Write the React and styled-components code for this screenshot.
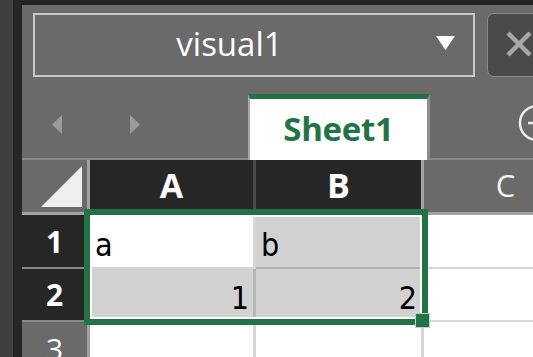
import React from 'react'
import styled, {createGlobalStyle} from 'styled-components'

const GlobalStyle = createGlobalStyle`
  html, body {
    margin: 0;
    padding: 0;
    background: #262626;
  }
  body {
    font-family: "Open Sans", "Noto Sans", sans-serif;
  }
`

const green = '#217346'

export default function App() {
  return (
    <>
      <GlobalStyle />
      <Page>
        <LeftStrip />
        <Gutter />
        <Main>
          <Toolbar>
            <Dropdown>
              <DropLabel>visual1</DropLabel>
              <DropArrow>
                <svg width="19" height="14" viewBox="0 0 19 14">
                  <polygon points="0,0 19,0 9.5,14" fill="#fff" />
                </svg>
              </DropArrow>
            </Dropdown>
            <CloseButton>
              <svg width="26" height="26" viewBox="0 0 26 26">
                <path d="M2 2 L24 24 M24 2 L2 24" stroke="#a8a8a8" strokeWidth="4.5" />
              </svg>
            </CloseButton>
          </Toolbar>

          <TabBar>
            <Nav>
              <svg width="10" height="19" viewBox="0 0 10 19">
                <polygon points="10,0 10,19 0,9.5" fill="#9c9c9c" />
              </svg>
              <svg width="10" height="19" viewBox="0 0 10 19">
                <polygon points="0,0 0,19 10,9.5" fill="#9c9c9c" />
              </svg>
            </Nav>
            <Tab>Sheet1</Tab>
            <AddSheet>
              <svg width="38" height="38" viewBox="0 0 38 38">
                <circle cx="19" cy="19" r="17" fill="none" stroke="#ececec" strokeWidth="2.5" />
                <path d="M10 19 H28 M19 10 V28" stroke="#ececec" strokeWidth="2.5" />
              </svg>
            </AddSheet>
          </TabBar>

          <Grid>
            <Corner>
              <svg width="41" height="41" viewBox="0 0 41 41">
                <polygon points="41,0 41,41 0,41" fill="#efefef" />
              </svg>
            </Corner>
            <ColHead active>A</ColHead>
            <ColHead active last>B</ColHead>
            <ColHead>C</ColHead>

            <RowHead active>1</RowHead>
            <Cell>a</Cell>
            <Cell sel>b</Cell>
            <Cell />

            <RowHead active>2</RowHead>
            <Cell sel num>1</Cell>
            <Cell sel num>2</Cell>
            <Cell />

            <RowHead>3</RowHead>
            <Cell />
            <Cell />
            <Cell />

            <Selection />
            <Handle />
          </Grid>
        </Main>
      </Page>
    </>
  )
}

const Page = styled.div`
  display: flex;
  width: 533px;
  height: 357px;
  overflow: hidden;
`

const LeftStrip = styled.div`
  width: 13px;
  flex: none;
  background: #3f3f3f;
`

const Gutter = styled.div`
  width: 9px;
  flex: none;
  background: #262626;
`

const Main = styled.div`
  flex: 1;
  min-width: 0;
  display: flex;
  flex-direction: column;
  background: #6a6a6a;
  border-top: 5px solid #232323;
  overflow: hidden;
`

const Toolbar = styled.div`
  display: flex;
  gap: 12px;
  padding: 8px 0 0 11px;
  height: 64px;
  flex: none;
`

const Dropdown = styled.div`
  width: 442px;
  flex: none;
  box-sizing: border-box;
  border: 2px solid #c8c8c8;
  display: flex;
  align-items: center;
`

const DropLabel = styled.div`
  flex: 1;
  text-align: center;
  color: #fff;
  font-size: 33px;
  line-height: 1;
  padding: 0 0 4px 6px;
`

const DropArrow = styled.div`
  width: 55px;
  display: flex;
  justify-content: center;
  padding-bottom: 4px;
`

const CloseButton = styled.div`
  width: 64px;
  height: 64px;
  flex: none;
  box-sizing: border-box;
  background: #4a4a4a;
  border: 1px solid #8a8a8a;
  border-radius: 7px;
  display: flex;
  align-items: center;
  justify-content: center;
  padding-bottom: 2px;
`

const TabBar = styled.div`
  height: 83px;
  flex: none;
  display: flex;
  align-items: flex-end;
  box-shadow: inset 0 -2px 0 #8a8a8a;
`

const Nav = styled.div`
  width: 226px;
  height: 66px;
  flex: none;
  box-sizing: border-box;
  display: flex;
  align-items: center;
  gap: 68px;
  padding: 0 0 5px 30px;
`

const Tab = styled.div`
  width: 182px;
  height: 66px;
  flex: none;
  box-sizing: border-box;
  background: #fff;
  border-top: 5px solid ${green};
  border-left: 2px solid #a8a8a8;
  border-right: 3px solid #8d8d8d;
  color: ${green};
  font-weight: 700;
  font-size: 33px;
  letter-spacing: -0.3px;
  display: flex;
  align-items: center;
  justify-content: center;
  padding-bottom: 2px;
`

const AddSheet = styled.div`
  align-self: center;
  margin: 8px 0 0 88px;
  display: flex;
`

const Grid = styled.div`
  position: relative;
  flex: none;
  display: grid;
  grid-template-columns: 68px 166px 168px 166px;
  grid-template-rows: 55px 54px 53px 54px;
`

const Corner = styled.div`
  box-sizing: border-box;
  background: #6a6a6a;
  border-right: 3px solid #a2a2a2;
  border-bottom: 3px solid #a2a2a2;
  display: flex;
  align-items: flex-end;
  justify-content: flex-end;
  padding: 0 5px 5px 0;
`

const ColHead = styled.div`
  box-sizing: border-box;
  background: ${p => (p.active ? '#262626' : '#6a6a6a')};
  border-right: 3px solid ${p => (p.active && !p.last ? '#4c4c4c' : '#a2a2a2')};
  border-bottom: 3px solid #a2a2a2;
  color: ${p => (p.active ? '#fff' : '#f2f2f2')};
  font-weight: ${p => (p.active ? 700 : 400)};
  font-size: ${p => (p.active ? '34px' : '31px')};
  display: flex;
  align-items: center;
  justify-content: center;
  padding-bottom: 2px;
`

const RowHead = styled.div`
  box-sizing: border-box;
  background: ${p => (p.active ? '#262626' : '#6a6a6a')};
  border-right: 3px solid #a2a2a2;
  border-bottom: 2px solid #8a8a8a;
  color: #fff;
  font-weight: ${p => (p.active ? 700 : 400)};
  font-size: 30px;
  display: flex;
  justify-content: center;
  align-items: center;
`

const Cell = styled.div`
  box-sizing: border-box;
  background: ${p => (p.sel ? '#d2d2d2' : '#fff')};
  border-right: 3px solid ${p => (p.sel ? '#b6b6b6' : '#d6d6d6')};
  border-bottom: 2px solid ${p => (p.sel ? '#b2b2b2' : '#d6d6d6')};
  color: #000;
  font-family: "DejaVu Sans Condensed", "DejaVu Sans", sans-serif;
  font-size: 32px;
  line-height: 1;
  display: flex;
  align-items: flex-end;
  justify-content: ${p => (p.num ? 'flex-end' : 'flex-start')};
  padding: 0 4px 6px 5px;
`

const Selection = styled.div`
  position: absolute;
  left: 62px;
  top: 49px;
  width: 344px;
  height: 116px;
  box-sizing: border-box;
  border: 6px solid ${green};
  box-shadow: inset 0 0 0 2px #fff;
  pointer-events: none;
`

const Handle = styled.div`
  position: absolute;
  left: 393px;
  top: 153px;
  width: 15px;
  height: 15px;
  box-sizing: border-box;
  background: ${green};
  border: 1px solid #b9d6c2;
`
